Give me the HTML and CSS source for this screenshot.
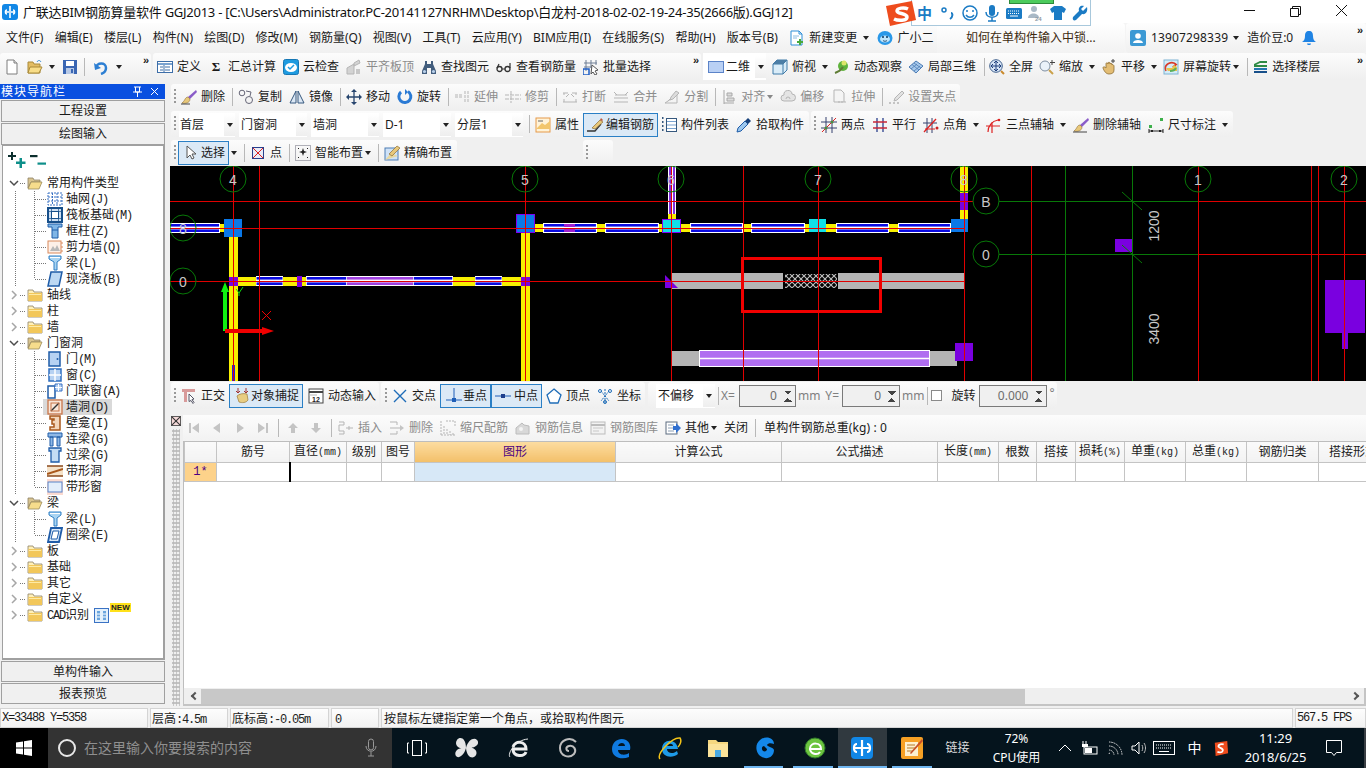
FILE: index.html
```html
<!DOCTYPE html>
<html lang="zh">
<head>
<meta charset="utf-8">
<title>广联达BIM钢筋算量软件 GGJ2013</title>
<link rel="stylesheet" href="styles.css">
</head>
<body>
<svg class="sprite" xmlns="http://www.w3.org/2000/svg">
  <symbol id="fo" viewBox="0 0 16 16"><path d="M1 3h5l1 2h6v2H4L1 13z" fill="#d9c48e" stroke="#8d8165" stroke-width=".8"/><path d="M4 7h11l-3 7H1z" fill="#f6dc8c" stroke="#9a8a5c" stroke-width=".8"/></symbol>
  <symbol id="fc" viewBox="0 0 16 16"><path d="M1 3h5l1 2h8v9H1z" fill="#fff0b8" stroke="#8d8165" stroke-width=".8"/><path d="M1.5 6h13.5v8H1.500z" fill="#f2c75a"/><path d="M2 7h12v1H2z" fill="#fdeaa6"/></symbol>
  <symbol id="chd" viewBox="0 0 10 10"><path d="M1 3l4 4 4-4" fill="none" stroke="#4d4d4d" stroke-width="1.5"/></symbol>
  <symbol id="chr" viewBox="0 0 10 10"><path d="M3 1l4 4-4 4" fill="none" stroke="#a6a6a6" stroke-width="1.500"/></symbol>
  <symbol id="beam" viewBox="0 0 16 16"><path d="M2 1h12v3l-4 3v8H7V7L2 4z" fill="#a9d4f2" stroke="#2f7fc4"/><path d="M3 2.500h10" stroke="#fff"/></symbol>
  <symbol id="st" viewBox="0 0 100 10" preserveAspectRatio="none"><rect width="100" height="10" fill="#fff"/><rect x="2" y="1" width="96" height="2.600" fill="#0a0ae0"/><rect x="2" y="6.400" width="96" height="2.600" fill="#0a0ae0"/></symbol>
  <symbol id="stp" viewBox="0 0 100 10" preserveAspectRatio="none"><rect width="100" height="10" fill="#fff"/><rect y="1" width="100" height="2.600" fill="#a040e0"/><rect y="6.400" width="100" height="2.600" fill="#a040e0"/></symbol>
</svg>

<header class="titlebar">
  <svg class="appicon" viewBox="0 0 16 16"><rect width="16" height="16" rx="3" fill="#1187e6"/><path d="M8 2v5M8 9v5M3 8h10M5 6c-2 0-2 4 0 4M11 6c2 0 2 4 0 4" fill="none" stroke="#fff" stroke-width="1.600"/></svg>
  <span class="title">广联达BIM钢筋算量软件 GGJ2013 - [C:\Users\Administrator.PC-20141127NRHM\Desktop\白龙村-2018-02-02-19-24-35(2666版).GGJ12]</span>
  <div class="winbtns">
    <svg viewBox="0 0 46 23"><path d="M18 10.500h11" stroke="#111"/></svg>
    <svg viewBox="0 0 46 23"><path d="M18.500 8.500h8v8h-8zM20.500 8.500v-2h8v8h-2" fill="none" stroke="#111"/></svg>
    <svg viewBox="0 0 46 23"><path d="M18 5l11 11M29 5L18 16" stroke="#111"/></svg>
  </div>
</header>

<div class="sogou">
  <svg class="sg-s" viewBox="0 0 32 26"><path d="M1 6l26-5 4 19-26 6z" fill="#ee4c1d"/><path d="M23 9c-4-2-11-1-11 2s10 2 10 6-9 4-13 2" fill="none" stroke="#fff" stroke-width="3.500"/></svg>
  <div class="sg-bar">
    <span class="sg-zh">中</span>
    <svg viewBox="0 0 18 18"><circle cx="5" cy="6" r="2" fill="none" stroke="#1b7bc4" stroke-width="1.500"/><path d="M12 9c2 0 2 4-1 6" fill="none" stroke="#1b7bc4" stroke-width="2"/></svg>
    <svg viewBox="0 0 18 18"><circle cx="9" cy="9" r="7" fill="none" stroke="#1b7bc4" stroke-width="1.500"/><path d="M6 6v2M12 6v2M5 11c2 3 6 3 8 0" fill="none" stroke="#1b7bc4" stroke-width="1.500"/></svg>
    <svg viewBox="0 0 18 18"><rect x="6" y="1" width="6" height="11" rx="3" fill="#1b7bc4"/><path d="M3 8c0 7 12 7 12 0M9 14v3M5 17h8" fill="none" stroke="#1b7bc4" stroke-width="1.500"/></svg>
    <svg viewBox="0 0 18 18"><rect x="1" y="4" width="16" height="11" rx="1.500" fill="#1b7bc4"/><path d="M3 7h12M3 9.500h12" stroke="#fff" stroke-dasharray="1 1"/><path d="M5 12h8" stroke="#fff"/></svg>
    <svg viewBox="0 0 18 18"><circle cx="7" cy="5" r="3" fill="#a9b9c6"/><path d="M1 14c0-6 11-6 11 0z" fill="#a9b9c6"/><text x="8" y="17" class="sg-24">24</text></svg>
    <svg viewBox="0 0 18 18"><path d="M5 2h8l4 3-2 4-2-1v8H5V8L3 9 1 5z" fill="#1b7bc4"/></svg>
    <svg viewBox="0 0 18 18"><path d="M16 3l-4 4-2-2 3-3c-3-1-6 1-5 5L2 13c-1 3 1 4 3 3l6-6c4 1 6-3 5-7z" fill="#1b7bc4"/></svg>
  </div>
  <div class="sg-tab"></div>
</div>

<nav class="menubar">
  <div class="menu-main">
    <span>文件(F)</span><span>编辑(E)</span><span>楼层(L)</span><span>构件(N)</span><span>绘图(D)</span><span>修改(M)</span><span>钢筋量(Q)</span><span>视图(V)</span><span>工具(T)</span><span>云应用(Y)</span><span>BIM应用(I)</span><span>在线服务(S)</span><span>帮助(H)</span><span>版本号(B)</span>
    <span class="t"><svg class="i" viewBox="0 0 16 16"><path d="M2 1h8l3 3v11H2z" fill="#fff" stroke="#2f8fd8"/><path d="M10 1v3h3" fill="none" stroke="#2f8fd8"/><path d="M4 6h6M4 8h4" stroke="#8dbde0"/><path d="M10 9h2v2h2v2h-2v2h-2v-2H8v-2h2z" fill="#47a93c"/></svg><span>新建变更</span><i class="dd"></i></span>
    <span class="t t-xiao"><svg class="i" viewBox="0 0 16 16"><ellipse cx="8" cy="8" rx="7.500" ry="7" fill="#2a98e8"/><ellipse cx="8" cy="9" rx="5" ry="3.600" fill="#bfe5fb"/><circle cx="6" cy="7" r="1" fill="#08355e"/><circle cx="10" cy="7" r="1" fill="#08355e"/><path d="M6 10.500c1 1 3 1 4 0" fill="none" stroke="#08355e" stroke-width=".8"/></svg><span>广小二</span></span>
  </div>
  <div class="menu-hint"><span>如何在单构件输入中锁...</span></div>
  <div class="menu-user">
    <svg class="i" viewBox="0 0 16 16"><rect width="16" height="16" rx="2" fill="#3c99d4"/><circle cx="8" cy="6" r="2.800" fill="#fff"/><path d="M3 13c0-4 10-4 10 0z" fill="#fff"/></svg>
    <span class="num">13907298339</span><i class="dd dd-u"></i><span>造价豆:0</span>
    <svg class="i bell" viewBox="0 0 16 16"><path d="M8 1c-3 0-4 2-4 5 0 3-1 5-3 6h14c-2-1-3-3-3-6 0-3-1-5-4-5z" fill="#2084e4"/><path d="M6 13.500c0 2 4 2 4 0z" fill="#2084e4"/></svg>
    <b class="more">»</b>
  </div>
</nav>

<div class="tb1">
  <div class="band band-a">
    <svg class="i" viewBox="0 0 16 16"><path d="M3 1h7l3 3v11H3z" fill="#fff" stroke="#7d7d7d"/><path d="M10 1v3h3" fill="#e8e8e8" stroke="#7d7d7d"/></svg>
    <span class="t"><svg class="i" viewBox="0 0 16 16"><path d="M1 3h5l1 2h6v9H1z" fill="#e3bd63" stroke="#a98a3a"/><path d="M3 8h12l-3 6H1z" fill="#f8dd88" stroke="#a98a3a"/><path d="M10 3c1-2 3-2 4 0" fill="none" stroke="#2c86d1"/></svg><i class="dd dd-near"></i></span>
    <svg class="i" viewBox="0 0 16 16"><rect x="1" y="1" width="14" height="14" fill="#3a66b3"/><rect x="4" y="2" width="8" height="5" fill="#fff"/><rect x="4" y="9" width="8" height="6" fill="#b7c9e6"/><rect x="9" y="10" width="2" height="4" fill="#3a66b3"/></svg>
    <i class="sep"></i>
    <span class="t t-undo"><svg class="i" viewBox="0 0 16 16"><path d="M3 9c1-6 10-6 10 0 0 3-2 5-5 6" fill="none" stroke="#2d7fd3" stroke-width="2.500"/><path d="M1 4l1 7 6-2z" fill="#2d7fd3"/></svg><i class="dd dd-near2"></i></span>
    <b class="more">»</b>
  </div>
  <div class="band band-b">
    <span class="t"><svg class="i" viewBox="0 0 16 16"><rect x=".5" y="2.500" width="15" height="11" fill="#fff" stroke="#3d6ea8"/><path d="M1 5h14" stroke="#7aa3d0" stroke-width="2"/><path d="M3 8h3M3 11h3M8 8h5M8 11h5M7 6v7" stroke="#3d6ea8"/></svg><span>定义</span></span>
    <span class="t"><b class="sigma">Σ</b><span>汇总计算</span></span>
    <span class="t"><svg class="i" viewBox="0 0 16 16"><rect x=".5" y=".5" width="15" height="15" rx="2" fill="#1e9be0" stroke="#1677b4"/><ellipse cx="8" cy="8.500" rx="6" ry="4.500" fill="#fff"/><path d="M5 8l2 2 4-4" fill="none" stroke="#1e9be0" stroke-width="1.500"/></svg><span>云检查</span></span>
    <span class="t off"><svg class="i" viewBox="0 0 16 16"><path d="M1 9l7-4v10H1zM8 4l5-3 1 3-6 3z" fill="#d3d3d3" stroke="#b5b5b5"/><path d="M10 10h4v5h-4z" fill="#c7c7c7"/></svg><span>平齐板顶</span></span>
    <span class="t"><svg class="i" viewBox="0 0 16 16"><path d="M4 2h2v3h4V2h2v3l3 7v3H10V9H6v6H1v-3l3-7z" fill="#425d7d"/><circle cx="3.500" cy="12.500" r="1.600" fill="#b8d0ea"/><circle cx="12.500" cy="12.500" r="1.600" fill="#b8d0ea"/></svg><span>查找图元</span></span>
    <span class="t"><svg class="i" viewBox="0 0 16 16"><circle cx="3.500" cy="10" r="2.500" fill="none" stroke="#333" stroke-width="1.300"/><circle cx="11.500" cy="10" r="2.500" fill="none" stroke="#333" stroke-width="1.300"/><path d="M6 10h3M1 9l2-4M14 9V4" fill="none" stroke="#333" stroke-width="1.200"/></svg><span>查看钢筋量</span></span>
    <span class="t"><svg class="i" viewBox="0 0 16 16"><path d="M3 1v11M8 1v8M13 1v5M1 4h13M1 8h9" stroke="#6f7f95"/><rect x="0" y="10" width="6" height="6" fill="none" stroke="#1f5ec4" stroke-width="1.500"/><path d="M9 6l6 5-3 1 2 3-2 1-2-3-2 2z" fill="#fff" stroke="#555"/></svg><span>批量选择</span></span>
    <b class="more">»</b>
  </div>
  <div class="band band-c">
    <span class="mode"><svg class="i" viewBox="0 0 16 16"><rect x=".5" y="2.500" width="15" height="11" fill="#b9d0f4" stroke="#5b83c8"/></svg><span>二维</span><i class="ddcell"><i class="dd"></i></i></span>
    <span class="t"><svg class="i" viewBox="0 0 16 16"><path d="M1 5l4-4h10v10l-4 4H1z" fill="#d9ecf8" stroke="#3f7aa8"/><path d="M1 5h10v10M11 5l4-4" fill="none" stroke="#3f7aa8"/><path d="M1 5l4-4h10l-4 4z" fill="#4c7ea6"/></svg><span>俯视</span><i class="dd"></i></span>
    <span class="t"><svg class="i" viewBox="0 0 16 16"><circle cx="9" cy="7" r="5" fill="#5fb33c"/><circle cx="10" cy="4" r="2.500" fill="#dce66a"/><path d="M1 14c3-1 6-3 8-6" stroke="#5f7d35" stroke-width="2" fill="none"/></svg><span>动态观察</span></span>
    <span class="t"><svg class="i" viewBox="0 0 16 16"><path d="M1 8l7-6 7 5-7 7z" fill="#a7c9ec" stroke="#4c7cb4"/><path d="M4 5.500l7 5.500M6 4l7 5M3 10l6-5M6 12l6-5" stroke="#4c7cb4" stroke-width=".8"/></svg><span>局部三维</span></span>
    <i class="sep"></i>
    <span class="t"><svg class="i" viewBox="0 0 16 16"><circle cx="7" cy="7" r="6.300" fill="#d6e4f5" stroke="#40608c"/><path d="M7 2v10M2 7h10M7 2l-2 2M7 2l2 2M7 12l-2-2M7 12l2-2M2 7l2-2M2 7l2 2M12 7l-2-2M12 7l-2 2" fill="none" stroke="#1f3f7c"/><path d="M12 12l3 3" stroke="#c98a2c" stroke-width="2"/></svg><span>全屏</span></span>
    <span class="t"><svg class="i" viewBox="0 0 16 16"><circle cx="6" cy="7" r="5" fill="#eaf2fa" stroke="#7e8ea1"/><path d="M10 11l4 4" stroke="#caa14a" stroke-width="2"/><path d="M13 1v5M11 3.500h5" stroke="#444"/></svg><span>缩放</span><i class="dd"></i></span>
    <span class="t"><svg class="i" viewBox="0 0 16 16"><path d="M2 9c0-2 2-1 3 0V5c0-2 2-1 2 0v-1c0-1 2-1 2 0v1c0-1 2-1 2 0v1c0-1 2 0 2 1v4c0 3-2 4-5 4s-5-3-6-6z" fill="#e3bd74" stroke="#8e6f35" stroke-width=".8"/><path d="M12 0v4M10 2h4" stroke="#444"/></svg><span>平移</span><i class="dd"></i></span>
    <span class="t"><svg class="i" viewBox="0 0 16 16"><rect x="1" y="1" width="14" height="14" fill="#d3ecf8" stroke="#7fb4d3"/><path d="M3 12c-3-7 6-11 11-6" fill="none" stroke="#d73a2a" stroke-width="1.500"/><path d="M13 4v4h-4z" fill="#d73a2a"/><path d="M3 9h6l2-3 3 2v4H5z" fill="#e8c44d"/><path d="M7 12c3 0 5-1 6-3" stroke="#5bb05a" fill="none" stroke-width="2"/></svg><span>屏幕旋转</span><i class="dd dd-tight"></i></span>
    <i class="sep"></i>
    <span class="t"><svg class="i" viewBox="0 0 16 16"><path d="M2 5l6-3h7v2H8L4 6h11v2H2z" fill="#2f8b45"/><path d="M2 9h13v2H2z" fill="#2577b0"/><path d="M2 12h13v2H2z" fill="#174f8a"/></svg><span>选择楼层</span></span>
    <b class="more">»</b>
  </div>
</div>

<div class="work">
  <aside class="nav">
    <div class="nav-h"><span>模块导航栏</span><svg viewBox="0 0 36 15"><path d="M5 3h7M6.500 3v5h4V3M4 8h9M8.500 8v5" fill="none" stroke="#fff"/><path d="M22 4l7 7M29 4l-7 7" stroke="#fff"/></svg></div>
    <div class="nav-b">工程设置</div>
    <div class="nav-b">绘图输入</div>
    <div class="tree">
      <div class="tree-tools">
        <svg viewBox="0 0 18 18"><path d="M3 0h2v3h3v2H5v3H3V5H0V3h3z" fill="#0c2f2e"/><path d="M11.500 6h2.500v3.500H17.500V12H14v4h-2.500v-4H8V9.500h3.500z" fill="#0e8f8a"/></svg>
        <svg viewBox="0 0 18 18"><path d="M0 3h7.500v2.200H0z" fill="#0c2f2e"/><path d="M7.500 10.500H16v2.200H7.500z" fill="#0e8f8a"/></svg>
      </div>

      <div class="tr top"><svg class="ch"><use href="#chd"/></svg><svg class="fd"><use href="#fo"/></svg><span>常用构件类型</span></div>
      <div class="kids"><div class="kin">
        <div class="tr"><svg class="ti" viewBox="0 0 16 16"><path d="M1 2h14v12H1zM5.500 2v12M10 2v12M1 6h14M1 10h14" fill="none" stroke="#3a72c4" stroke-dasharray="2 1"/></svg><span>轴网<small>(J)</small></span></div>
        <div class="tr"><svg class="ti" viewBox="0 0 16 16"><rect x="1" y="1" width="14" height="14" fill="#cfe0f3" stroke="#174f8a" stroke-width="2"/><rect x="4.500" y="4.500" width="7" height="7" fill="#fff" stroke="#174f8a"/><path d="M1 4.500h14M1 11.500h14M4.500 1v14M11.500 1v14" stroke="#174f8a" stroke-width=".7"/></svg><span>筏板基础<small>(M)</small></span></div>
        <div class="tr"><svg class="ti" viewBox="0 0 16 16"><path d="M1 1h14v3H11v11H5V4H1z" fill="#7fb5e6" stroke="#1f5ca8"/><path d="M5 7h6" stroke="#1f5ca8"/></svg><span>框柱<small>(Z)</small></span></div>
        <div class="tr"><svg class="ti" viewBox="0 0 16 16"><rect x="1" y="2" width="13" height="12" fill="#fdf0e8" stroke="#d98a5c"/><path d="M3 12l3-5 2 3 2-4 3 6z" fill="#b8b8b8"/><path d="M14 4h2M14 8h2M14 12h2" stroke="#d98a5c"/></svg><span>剪力墙<small>(Q)</small></span></div>
        <div class="tr"><svg class="ti"><use href="#beam"/></svg><span>梁<small>(L)</small></span></div>
        <div class="tr"><svg class="ti" viewBox="0 0 16 16"><path d="M4 1h11l-3 14H1z" fill="#bcd8f3" stroke="#1f5ca8" stroke-width="1.500"/></svg><span>现浇板<small>(B)</small></span></div>
      </div></div>

      <div class="tr top"><svg class="ch"><use href="#chr"/></svg><svg class="fd"><use href="#fc"/></svg><span>轴线</span></div>
      <div class="tr top"><svg class="ch"><use href="#chr"/></svg><svg class="fd"><use href="#fc"/></svg><span>柱</span></div>
      <div class="tr top"><svg class="ch"><use href="#chr"/></svg><svg class="fd"><use href="#fc"/></svg><span>墙</span></div>
      <div class="tr top"><svg class="ch"><use href="#chd"/></svg><svg class="fd"><use href="#fo"/></svg><span>门窗洞</span></div>
      <div class="kids"><div class="kin">
        <div class="tr"><svg class="ti" viewBox="0 0 16 16"><rect x="2" y="1" width="11" height="14" fill="#b7d2f2" stroke="#1f5ca8" stroke-width="1.500"/><circle cx="10.500" cy="8" r="1" fill="#1f5ca8"/></svg><span>门<small>(M)</small></span></div>
        <div class="tr"><svg class="ti" viewBox="0 0 16 16"><rect x="2" y="2" width="12" height="12" fill="#b7d2f2" stroke="#2f6fc0" stroke-width="1.500"/><path d="M8 2v12M2 8h12" stroke="#fff" stroke-width="1.500"/></svg><span>窗<small>(C)</small></span></div>
        <div class="tr"><svg class="ti" viewBox="0 0 16 16"><path d="M1 3h7v12H1z" fill="#fff" stroke="#1f5ca8" stroke-width="1.500"/><path d="M8 1h7v7H8z" fill="#b7d2f2" stroke="#3a72c4"/><path d="M11.500 1v7M8 4.500h7" stroke="#fff"/></svg><span>门联窗<small>(A)</small></span></div>
        <div class="tr sel"><svg class="ti" viewBox="0 0 16 16"><rect x="1" y="1" width="14" height="14" fill="#f8e6d8" stroke="#c8764a" stroke-width="1.300"/><path d="M4 12l8-8" stroke="#333" stroke-width="1.400"/><rect x="4" y="4" width="8" height="8" fill="none" stroke="#c8764a"/></svg><span>墙洞<small>(D)</small></span></div>
        <div class="tr"><svg class="ti" viewBox="0 0 16 16"><path d="M3 1h10v14H3v-3h4V9H5V5h2V4H3z" fill="#f3d6bb" stroke="#a9581c" stroke-width="1.500"/></svg><span>壁龛<small>(I)</small></span></div>
        <div class="tr"><svg class="ti" viewBox="0 0 16 16"><path d="M1 2h14v4H1zM3 6h3v9H3zM10 6h3v9h-3z" fill="#8fb8e6" stroke="#1f5ca8"/></svg><span>连梁<small>(G)</small></span></div>
        <div class="tr"><svg class="ti" viewBox="0 0 16 16"><path d="M2 1h12v3h-2v11H4V4H2z" fill="#c3dcf4" stroke="#1f5ca8" stroke-width="1.300"/></svg><span>过梁<small>(G)</small></span></div>
        <div class="tr"><svg class="ti" viewBox="0 0 16 16"><rect y="3" width="16" height="10" fill="#f5e2c9"/><path d="M0 3h16M0 13h16" stroke="#8a4a1c" stroke-width="1.400"/><path d="M0 11l16-5" stroke="#a9581c" stroke-width="2"/></svg><span>带形洞</span></div>
        <div class="tr"><svg class="ti" viewBox="0 0 16 16"><rect y="0" width="16" height="16" fill="#fbdad0"/><rect x="1" y="3" width="14" height="10" fill="#e3eefb" stroke="#5b83c8"/></svg><span>带形窗</span></div>
      </div></div>
      <div class="tr top"><svg class="ch"><use href="#chd"/></svg><svg class="fd"><use href="#fo"/></svg><span>梁</span></div>
      <div class="kids"><div class="kin">
        <div class="tr"><svg class="ti"><use href="#beam"/></svg><span>梁<small>(L)</small></span></div>
        <div class="tr"><svg class="ti" viewBox="0 0 16 16"><path d="M4 1h11l-3 14H1z" fill="#dbeafa" stroke="#1f5ca8" stroke-width="1.800"/><path d="M6 4h6l-2 8H4z" fill="#fff" stroke="#1f5ca8"/></svg><span>圈梁<small>(E)</small></span></div>
      </div></div>
      <div class="tr top"><svg class="ch"><use href="#chr"/></svg><svg class="fd"><use href="#fc"/></svg><span>板</span></div>
      <div class="tr top"><svg class="ch"><use href="#chr"/></svg><svg class="fd"><use href="#fc"/></svg><span>基础</span></div>
      <div class="tr top"><svg class="ch"><use href="#chr"/></svg><svg class="fd"><use href="#fc"/></svg><span>其它</span></div>
      <div class="tr top"><svg class="ch"><use href="#chr"/></svg><svg class="fd"><use href="#fc"/></svg><span>自定义</span></div>
      <div class="tr top"><svg class="ch"><use href="#chr"/></svg><svg class="fd"><use href="#fc"/></svg><span><small>CAD</small>识别</span>
        <svg class="cad" viewBox="0 0 15 15"><rect x=".5" y=".5" width="14" height="14" fill="#e3f0fb" stroke="#3a72c4"/><path d="M3 3v9h3V3zM9 3v9h3V3z" fill="#6aa5de"/><path d="M3 6h3M3 9h3M9 6h3M9 9h3" stroke="#fff"/></svg>
        <span class="new">NEW</span>
      </div>
    </div>
    <div class="nav-b b2">单构件输入</div>
    <div class="nav-b b2">报表预览</div>
  </aside>

  <main class="right">
    <div class="row row-a">
      <div class="band band-edit">
        <i class="grip"></i>
        <span class="t"><svg class="i" viewBox="0 0 16 16"><path d="M15 1L7 8l2 2 7-7z" fill="#8a5cc8"/><path d="M7 8c-3 0-3 4-6 6 3 1 8 0 8-4z" fill="#e8c87a" stroke="#8e6f35" stroke-width=".6"/><path d="M0 15h9" stroke="#444"/></svg><span>删除</span></span>
        <i class="sep"></i>
        <span class="t"><svg class="i" viewBox="0 0 16 16"><circle cx="4" cy="4" r="2.800" fill="none" stroke="#667"/><circle cx="11" cy="11" r="3.500" fill="none" stroke="#667"/><path d="M8 2l5 1-1 4" fill="none" stroke="#667"/></svg><span>复制</span></span>
        <span class="t"><svg class="i" viewBox="0 0 16 16"><path d="M7 2v12H1zM9 2v12h6z" fill="#dce8f5" stroke="#36587e"/></svg><span>镜像</span></span>
        <i class="sep"></i>
        <span class="t"><svg class="i" viewBox="0 0 16 16"><path d="M8 1v14M1 8h14" stroke="#27456e" stroke-width="1.300"/><path d="M8 0l-3 3h6zM8 16l-3-3h6zM0 8l3-3v6zM16 8l-3-3v6z" fill="#27456e"/></svg><span>移动</span></span>
        <span class="t"><svg class="i" viewBox="0 0 16 16"><path d="M4 3a6 6 0 1 0 7-.5" fill="none" stroke="#2a7ad4" stroke-width="3"/><path d="M8 0v6l3-3z" fill="#2a7ad4"/></svg><span>旋转</span></span>
        <i class="sep"></i>
        <span class="t off"><svg class="i" viewBox="0 0 16 16"><path d="M1 8h8M1 6h8M11 2v12M14 2v12" stroke="#b5b5b5" stroke-dasharray="3 1"/></svg><span>延伸</span></span>
        <span class="t off"><svg class="i" viewBox="0 0 16 16"><path d="M0 6h16M0 10h16M6 2v12" stroke="#b5b5b5" stroke-dasharray="4 1"/></svg><span>修剪</span></span>
        <i class="sep"></i>
        <span class="t off"><svg class="i" viewBox="0 0 16 16"><path d="M1 4h5M10 4h5M1 13h14M2 4v2M14 4v2M2 10v3M14 10v3" stroke="#b5b5b5"/><path d="M4 8l3-3M12 8L9 5" stroke="#b5b5b5"/></svg><span>打断</span></span>
        <span class="t off"><svg class="i" viewBox="0 0 16 16"><path d="M1 3l3 3M15 3l-3 3M1 13h14M1 9h14M2 6h12" stroke="#b5b5b5"/></svg><span>合并</span></span>
        <span class="t off"><svg class="i" viewBox="0 0 16 16"><path d="M1 14h12V6zM13 3L4 12" fill="none" stroke="#b5b5b5"/><path d="M12 2l3 2-6 6-3 1 1-3z" fill="#dcdcdc" stroke="#b5b5b5"/></svg><span>分割</span></span>
        <i class="sep"></i>
        <span class="t off"><svg class="i" viewBox="0 0 16 16"><path d="M3 1v14M3 14h10M6 4h5v3H6zM6 9h7v3H6z" fill="#dcdcdc" stroke="#a8a8a8"/></svg><span>对齐</span><i class="dd dd-tight gray"></i></span>
        <span class="t off"><svg class="i" viewBox="0 0 16 16"><path d="M4 12a3 3 0 0 1 0-6 4 4 0 0 1 8-1 3.500 3.500 0 0 1 0 7z" fill="#e4e4e4" stroke="#b5b5b5"/><path d="M6 10a2 2 0 0 1 4 0" fill="none" stroke="#b5b5b5"/></svg><span>偏移</span></span>
        <span class="t off"><svg class="i" viewBox="0 0 16 16"><path d="M3 1h7l3 3v9H3z" fill="#f4f4f4" stroke="#b5b5b5"/><path d="M7 13h8" stroke="#b5b5b5" stroke-dasharray="2 1"/></svg><span>拉伸</span></span>
        <i class="sep"></i>
        <span class="t off"><svg class="i" viewBox="0 0 16 16"><path d="M1 14h2M5 14h2M9 14h2" stroke="#b5b5b5" stroke-width="1.500"/><path d="M14 2l2 2-7 7-3 1 1-3z" fill="#e2e2e2" stroke="#b5b5b5"/></svg><span>设置夹点</span></span>
      </div>
    </div>

    <div class="row row-b">
      <div class="band band-sel">
        <i class="grip"></i>
        <div class="combos">
          <span class="combo first"><span>首层</span><i class="ddcell"><i class="dd"></i></i></span>
          <span class="combo"><span>门窗洞</span><i class="ddcell"><i class="dd"></i></i></span>
          <span class="combo"><span>墙洞</span><i class="ddcell"><i class="dd"></i></i></span>
          <span class="combo"><span>D-1</span><i class="ddcell"><i class="dd"></i></i></span>
          <span class="combo"><span>分层1</span><i class="ddcell"><i class="dd"></i></i></span>
        </div>
        <i class="sep"></i>
        <span class="t"><svg class="i" viewBox="0 0 16 16"><rect x="1" y="1" width="14" height="14" fill="#fff3d8" stroke="#e69a4a"/><path d="M1 12l6-6 3 2 5-4v8H1z" fill="#f2c66d"/><path d="M3 4h5" stroke="#666"/></svg><span>属性</span></span>
        <span class="t box"><svg class="i" viewBox="0 0 16 16"><path d="M0 14h8l6-7" fill="none" stroke="#333" stroke-width="1.300"/><path d="M5 11l8-8 3 2-8 7z" fill="#e8c87a" stroke="#8e6f35" stroke-width=".7"/><path d="M13 3l1-2 2 2-1 1" fill="#c05a3a"/></svg><span>编辑钢筋</span></span>
        <span class="t"><svg class="i" viewBox="0 0 16 16"><path d="M1 1h2M1 5h2M1 9h2M1 13h2" stroke="#36587e" stroke-width="2" stroke-dasharray="1.500 .7"/><rect x="5.500" y="1.500" width="10" height="13" fill="#fff" stroke="#36587e"/><path d="M6 4.500h9M6 8h9M6 11.500h9" stroke="#7aa3d0"/></svg><span>构件列表</span></span>
        <span class="t"><svg class="i" viewBox="0 0 16 16"><path d="M1 15l1-4 7-7 3 3-7 7z" fill="#9cc7ee" stroke="#1f5ca8"/><path d="M9 4l3-3 3 3-3 3z" fill="#16407a"/></svg><span>拾取构件</span></span>
      </div>
      <div class="band band-aux">
        <i class="grip"></i>
        <span class="t"><svg class="i" viewBox="0 0 16 16"><path d="M5 0v16M11 0v16M0 5h16M0 11h16" stroke="#34406e"/><path d="M1 15L15 1" stroke="#d22" /><circle cx="5" cy="11" r="1.500" fill="#4d8a3a"/><circle cx="11" cy="5" r="1.500" fill="#4d8a3a"/></svg><span>两点</span></span>
        <span class="t"><svg class="i" viewBox="0 0 16 16"><path d="M5 1v14M11 1v14" stroke="#2a3f8c" stroke-width="1.300"/><path d="M1 5h14M1 11h14" stroke="#c8283a" stroke-width="1.300"/></svg><span>平行</span></span>
        <span class="t"><svg class="i" viewBox="0 0 16 16"><path d="M4 1v15M9 1v15M0 6h14" stroke="#34406e"/><path d="M1 15L13 2" stroke="#d22" stroke-width="1.300"/><circle cx="14" cy="11" r="1.500" fill="#c22"/><path d="M2 12h10" stroke="#d22"/></svg><span>点角</span><i class="dd"></i></span>
        <span class="t"><svg class="i" viewBox="0 0 16 16"><path d="M2 15c0-6 4-11 10-12M0 9h14M6 5v11" fill="none" stroke="#d22" stroke-width="1.200"/><circle cx="13" cy="3" r="1.300" fill="#d22"/></svg><span>三点辅轴</span><i class="dd"></i></span>
        <span class="t"><svg class="i" viewBox="0 0 16 16"><path d="M15 1L7 8l2 2 7-7z" fill="#8a5cc8"/><path d="M7 8c-3 0-3 4-6 6 3 1 8 0 8-4z" fill="#e8c87a" stroke="#8e6f35" stroke-width=".6"/><path d="M0 15h14" stroke="#444"/></svg><span>删除辅轴</span></span>
        <span class="t"><svg class="i" viewBox="0 0 16 16"><rect x="1" y="8" width="3" height="3" fill="#3cb04a"/><rect x="12" y="1" width="3" height="3" fill="#3cb04a"/><path d="M1 12v4M15 12v4M1 14h14" stroke="#222"/><path d="M5 14l-2 0M11 14h2" stroke="#222" stroke-width="2"/></svg><span>尺寸标注</span><i class="dd"></i></span>
      </div>
    </div>

    <div class="row row-c">
      <div class="band band-tool">
        <i class="grip"></i>
        <span class="t box"><svg class="i" viewBox="0 0 16 16"><path d="M5 1v12l3-3 2 4 2-1-2-4h4z" fill="#fff" stroke="#555"/></svg><span>选择</span></span>
        <i class="dd dd-b"></i>
        <i class="sep"></i>
        <span class="t"><svg class="i" viewBox="0 0 16 16"><rect x="2.500" y="2.500" width="11" height="11" fill="#e8ecf8" stroke="#2a3f8c"/><path d="M3 3l10 10M13 3L3 13" stroke="#d22"/></svg><span>点</span></span>
        <i class="sep"></i>
        <span class="t"><svg class="i" viewBox="0 0 16 16"><rect x=".5" y=".5" width="15" height="15" fill="none" stroke="#667" stroke-dasharray="1 1"/><path d="M8 3l1 3 3 1-3 1-1 3-1-3-3-1 3-1z" fill="#222"/><path d="M3 3h1v1H3zM12 3h1v1h-1zM3 12h1v1H3zM12 12h1v1h-1z" fill="#222"/></svg><span>智能布置</span><i class="dd dd-tight"></i></span>
        <i class="sep"></i>
        <span class="t"><svg class="i" viewBox="0 0 16 16"><rect x="1" y="3" width="13" height="12" fill="#cfe2f7" stroke="#4c7cb4"/><path d="M1 15l6-7 7 3" fill="#e8d8a0"/><path d="M5 9l8-8 3 2-8 8z" fill="#e8c87a" stroke="#8e6f35" stroke-width=".7"/></svg><span>精确布置</span></span>
      </div>
      <div class="band band-small"><i class="grip"></i></div>
    </div>

    <svg class="cad-view" viewBox="170 166 1196 215" xmlns="http://www.w3.org/2000/svg">
      <rect x="170" y="166" width="1196" height="215" fill="#000"/>
      <!-- upper beam run -->
      <g fill="#f8f000">
        <rect x="220" y="224" width="6" height="8"/><rect x="535" y="224" width="8" height="8"/><rect x="597" y="224" width="8" height="8"/>
        <rect x="659" y="224" width="4" height="8"/><rect x="681" y="224" width="9" height="8"/><rect x="743" y="224" width="8" height="8"/>
        <rect x="805" y="224" width="5" height="8"/><rect x="826" y="224" width="10" height="8"/><rect x="889" y="224" width="9" height="8"/>
        <rect x="229" y="237" width="9" height="144"/><rect x="521" y="233" width="9" height="148"/>
        <rect x="238" y="277" width="283" height="9"/>
        <rect x="668" y="214" width="8" height="5"/>
        <rect x="960" y="166" width="8" height="27"/><rect x="960" y="210" width="8" height="9"/>
      </g>
      <use href="#st" x="170" y="223" width="50" height="10"/><use href="#st" x="543" y="223" width="54" height="10"/><use href="#st" x="605" y="223" width="54" height="10"/>
      <use href="#st" x="690" y="223" width="53" height="10"/><use href="#st" x="751" y="223" width="54" height="10"/><use href="#st" x="836" y="223" width="53" height="10"/><use href="#st" x="898" y="223" width="53" height="10"/>
      <rect x="564" y="224" width="11" height="3" fill="#a020d0"/><rect x="564" y="229" width="11" height="3" fill="#a020d0"/>
      <!-- lower beam -->
      <use href="#st" x="256" y="276" width="27" height="10"/><use href="#st" x="306" y="276" width="41" height="10"/><use href="#stp" x="347" y="276" width="66" height="10"/><use href="#st" x="413" y="276" width="40" height="10"/><use href="#st" x="475" y="276" width="27" height="10"/>
      <rect x="297" y="276" width="5" height="11" fill="#7a00e0"/>
      <rect x="229" y="277" width="9" height="9" fill="#7a00e0"/><rect x="521" y="277" width="9" height="9" fill="#7a00e0"/>
      <!-- columns -->
      <rect x="224" y="219" width="18" height="18" fill="#0a78e8"/>
      <rect x="516.500" y="214.500" width="18" height="18" fill="#0a78e8" stroke="#8000f0"/>
      <rect x="662.500" y="219.500" width="18" height="13" fill="#10e0e8" stroke="#8000f0"/>
      <rect x="809" y="219" width="17" height="13" fill="#10e0e8"/>
      <rect x="951" y="219" width="17" height="13" fill="#0a78e8"/>
      <rect x="960" y="193" width="8" height="17" fill="#7a00e0"/>
      <rect x="668" y="166" width="8" height="48" fill="#fff"/><rect x="669" y="166" width="2" height="48" fill="#8030e0"/><rect x="673" y="166" width="2" height="48" fill="#8030e0"/>
      <rect x="232" y="365" width="3" height="16" fill="#2020e0"/>
      <!-- wall bars -->
      <rect x="671" y="273" width="293" height="16" fill="#b4b4b4"/>
      <rect x="783" y="273" width="55" height="16" fill="#000"/>
      <pattern id="hatch" width="6" height="6" patternUnits="userSpaceOnUse"><rect width="6" height="6" fill="#000"/><path d="M0 0l6 6M6 0L0 6" stroke="#c0c0c0" stroke-width="1.100"/></pattern>
      <rect x="785" y="274" width="52" height="14" fill="url(#hatch)"/>
      <path d="M665 275l13 13h-13z" fill="#7a00e0"/>
      <rect x="671" y="351" width="286" height="15" fill="#b4b4b4"/>
      <rect x="699.500" y="350.500" width="230" height="16" fill="#b06ef0" stroke="#fff"/>
      <path d="M699 358.500h231" stroke="#fff" stroke-width="1.500"/>
      <rect x="955" y="343" width="18" height="18" fill="#7a00e0"/>
      <rect x="1115" y="239" width="17" height="13" fill="#7a00e0"/>
      <rect x="1325" y="280" width="40" height="53" fill="#7a00e0"/><rect x="1342" y="333" width="6" height="16" fill="#7a00e0"/>
      <!-- grid lines -->
      <g stroke="#e00000" fill="none">
        <path d="M170 201.500H973M170 228.500H964M170 281.500H964M1198 254.500H1366M1198 201.500H1366"/>
        <path d="M233.500 166V381M259.500 166V381M525.500 166V381M671.500 166V381M743.500 166V381M818.500 166V381M964.500 166V381M1031.500 166V381M1198.500 166V381M1311.500 166V381M1318.500 166V381M1344.500 166V381"/>
      </g>
      <g stroke="#087808" fill="none">
        <path d="M999 201.500H1198M999 254.500H1198M1065.500 166V381M1132.500 166V381M1122 192l20 18M1122 245l20 18"/>
        <circle cx="233" cy="179" r="13"/><circle cx="525" cy="179" r="13"/><circle cx="671" cy="179" r="13"/><circle cx="818" cy="179" r="13"/><circle cx="964" cy="179" r="13"/><circle cx="1198" cy="179" r="13"/><circle cx="1344" cy="179" r="13"/>
        <circle cx="183" cy="228" r="13"/><circle cx="183" cy="281" r="13"/><circle cx="986" cy="201" r="13"/><circle cx="986" cy="254" r="13"/>
      </g>
      <g class="cad-t">
        <text x="233" y="185">4</text><text x="525" y="185">5</text><text x="671" y="185">6</text><text x="818" y="185">7</text><text x="964" y="185">8</text><text x="1198" y="185">1</text><text x="1344" y="185">2</text>
        <text x="183" y="234">8</text><text x="183" y="287">0</text><text x="986" y="207">B</text><text x="986" y="260">0</text>
        <text transform="translate(1159 226) rotate(-90)">1200</text><text transform="translate(1159 329) rotate(-90)">3400</text>
      </g>
      <!-- red selection and UCS -->
      <rect x="742.500" y="258.500" width="138" height="53" fill="none" stroke="#f00000" stroke-width="3"/>
      <path d="M223 331V288h4v43z" fill="#10f010"/><path d="M225 282l-4 10h8z" fill="#10f010"/>
      <path d="M225 329h43v4h-43z" fill="#f00000"/><path d="M262 327l12 4-12 4z" fill="#f00000"/>
      <path d="M262 311l9 9M271 311l-9 9" stroke="#f00000"/>
      <path d="M236 289l3 4 4-6M239 293v3" stroke="#10e010" fill="none"/>
    </svg>

    <div class="row row-d">
      <div class="band band-d1">
        <i class="grip"></i>
        <span class="t"><svg class="i" viewBox="0 0 16 16"><path d="M1 1h13v3H6v10H3V4H1z" fill="#d89a9a"/><path d="M8 6l5 5-2 .5 2 3-1 1-2-3-2 1z" fill="#fff" stroke="#556"/></svg><span>正交</span></span>
        <span class="t box"><svg class="i" viewBox="0 0 16 16"><path d="M4 0v5M12 0v5M4 5l-2-2M4 5l2-2M12 5l-2-2M12 5l2-2" fill="none" stroke="#a03030"/><path d="M3 8c2-2 6-3 10-2l1 6c-2 3-6 3-9 2z" fill="#e8cd82" stroke="#9c7a3a" stroke-width=".7"/></svg><span>对象捕捉</span></span>
        <span class="t"><svg class="i" viewBox="0 0 16 16"><rect x="1" y="1" width="14" height="14" fill="#fff" stroke="#444"/><path d="M1 4h14" stroke="#444" stroke-width="2"/><path d="M1 7h8" stroke="#b5b5b5"/><text x="4" y="14" class="ico-t">12</text></svg><span>动态输入</span></span>
      </div>
      <div class="band band-d2">
        <i class="grip"></i>
        <span class="t"><svg class="i" viewBox="0 0 16 16"><path d="M2 2l12 12M14 2L2 14" stroke="#1f6db8" stroke-width="1.400"/></svg><span>交点</span></span>
        <span class="t box"><svg class="i" viewBox="0 0 16 16"><path d="M0 12h16" stroke="#1f5fb8"/><path d="M8 0v12" stroke="#1f5fb8" stroke-width="1"/><rect x="6" y="10" width="4" height="4" fill="#1f5fb8"/></svg><span>垂点</span></span>
        <span class="t box box-j"><svg class="i" viewBox="0 0 16 16"><path d="M0 8h16" stroke="#1f5fb8"/><rect x="6" y="6" width="4" height="4" fill="#1f3f8c"/></svg><span>中点</span></span>
        <span class="t"><svg class="i" viewBox="0 0 16 16"><path d="M8 1l7 6-3 8H4L1 7z" fill="#fff" stroke="#1f6db8" stroke-width="1.300"/></svg><span>顶点</span></span>
        <span class="t"><svg class="i" viewBox="0 0 16 16"><path d="M4 3l4 5-4 5M12 3L8 8l4 5M8 1v14" fill="none" stroke="#1f6db8" stroke-dasharray="2 1"/><circle cx="3" cy="3" r="1.500" fill="none" stroke="#1f6db8"/><circle cx="13" cy="3" r="1.500" fill="none" stroke="#1f6db8"/><circle cx="8" cy="14" r="1.500" fill="none" stroke="#1f6db8"/></svg><span>坐标</span></span>
      </div>
      <div class="band band-d3">
        <span class="combo c-off"><span>不偏移</span><i class="ddcell"><i class="dd"></i></i></span>
        <i class="sep s-x"></i>
        <span class="gr">X=</span>
        <span class="num-in n-x"><b>0</b><i class="spin"></i></span>
        <span class="gr lab-mm">mm</span>
        <span class="gr lab-y">Y=</span>
        <span class="num-in n-y"><b>0</b><i class="spin"></i></span>
        <span class="gr lab-mm">mm</span>
        <i class="sep s-r"></i>
        <i class="chk"></i>
        <span class="lab-r">旋转</span>
        <span class="num-in n-r"><b>0.000</b><i class="spin"></i></span>
        <span class="gr lab-d">°</span>
      </div>
    </div>

    <section class="panel">
      <div class="strip">
        <svg viewBox="0 0 12 12"><rect x=".5" y=".5" width="11" height="11" fill="#f4d8d8" stroke="#444"/><path d="M1 1l10 10M11 1L1 11" stroke="#333" stroke-width="1.300"/></svg>
        <i class="strip-dots"></i>
      </div>
      <div class="pane">
        <div class="ptools">
          <svg class="i" viewBox="0 0 16 16"><path d="M3 3h2v10H3zM13 3v10L6 8z" fill="#c4c4c4"/></svg>
          <svg class="i" viewBox="0 0 16 16"><path d="M11 3v10L4 8z" fill="#c4c4c4"/></svg>
          <svg class="i" viewBox="0 0 16 16"><path d="M5 3v10l7-5z" fill="#c4c4c4"/></svg>
          <svg class="i" viewBox="0 0 16 16"><path d="M13 3h-2v10h2zM3 3v10l7-5z" fill="#c4c4c4"/></svg>
          <i class="sep"></i>
          <svg class="i" viewBox="0 0 16 16"><path d="M8 3l5 5h-3v5H6V8H3z" fill="#c4c4c4"/></svg>
          <svg class="i" viewBox="0 0 16 16"><path d="M8 13l5-5h-3V3H6v5H3z" fill="#c4c4c4"/></svg>
          <i class="sep"></i>
          <span class="t off"><svg class="i" viewBox="0 0 16 16"><path d="M1 2h5v3H1M1 11h5v3H1M1 5v6" fill="none" stroke="#b5b5b5"/><path d="M8 8h7M11 6v4" stroke="#b5b5b5"/></svg><span>插入</span></span>
          <span class="t off"><svg class="i" viewBox="0 0 16 16"><path d="M1 2h7v3M1 14h7v-3M1 8h13" fill="none" stroke="#b5b5b5"/><path d="M11 5l4 3-4 3z" fill="#c4c4c4"/></svg><span>删除</span></span>
          <span class="t off"><svg class="i" viewBox="0 0 16 16"><path d="M1 1v14M4 6v9M7 9v6M10 11v4M13 13v2M1 15h14M6 1h9v5" fill="none" stroke="#b5b5b5" stroke-dasharray="2 1"/></svg><span>缩尺配筋</span></span>
          <span class="t off"><svg class="i" viewBox="0 0 16 16"><path d="M1 8l6-5 2 2 5 1v8H1z" fill="#d8d8d8" stroke="#bcbcbc"/><circle cx="6" cy="9" r="2" fill="#f4f4f4"/></svg><span>钢筋信息</span></span>
          <span class="t off"><svg class="i" viewBox="0 0 16 16"><rect x="1" y="2" width="14" height="12" fill="#f2f2f2" stroke="#bcbcbc"/><path d="M1 5h14" stroke="#bcbcbc" stroke-width="2"/><path d="M3 8h10M3 11h6" stroke="#c8c8c8"/></svg><span>钢筋图库</span></span>
          <span class="t"><svg class="i" viewBox="0 0 16 16"><rect x="1" y="2" width="11" height="12" fill="#fff" stroke="#5c6c80"/><path d="M3 5h6M3 8h6M3 11h6" stroke="#8ea0b5"/><path d="M8 6h3V3l5 5-5 5v-3H8z" fill="#2f6fd0"/></svg><span>其他</span><i class="dd dd-tight"></i></span>
          <span>关闭</span>
          <i class="sep"></i>
          <span class="total">单构件钢筋总重(kg) : 0</span>
        </div>
        <div class="grid-wrap">
          <table class="grid">
            <colgroup><col class="c0"><col class="c1"><col class="c2"><col class="c3"><col class="c4"><col class="c5"><col class="c6"><col class="c7"><col class="c8"><col class="c9"><col class="c10"><col class="c11"><col class="c12"><col class="c13"><col class="c14"><col class="c15"></colgroup>
            <thead><tr><th></th><th>筋号</th><th>直径<small>(mm)</small></th><th>级别</th><th>图号</th><th class="hot">图形</th><th>计算公式</th><th>公式描述</th><th>长度<small>(mm)</small></th><th>根数</th><th>搭接</th><th>损耗<small>(%)</small></th><th>单重<small>(kg)</small></th><th>总重<small>(kg)</small></th><th>钢筋归类</th><th class="clip">搭接形式</th></tr></thead>
            <tbody><tr><td class="rh">1*</td><td></td><td class="cur"></td><td></td><td></td><td class="pick"></td><td></td><td></td><td></td><td></td><td></td><td></td><td></td><td></td><td></td><td></td></tr></tbody>
          </table>
        </div>
        <div class="hscroll"><i class="arr-l"></i><div class="thumb"></div><i class="arr-r"></i></div>
      </div>
    </section>
  </main>
</div>

<footer class="status">
  <span class="s1">X=33488 Y=5358</span>
  <span class="s2">层高<small>:4.5m</small></span>
  <span class="s3">底标高<small>:-0.05m</small></span>
  <span class="s4"><small>0</small></span>
  <span class="s5">按鼠标左键指定第一个角点，或拾取构件图元</span>
  <span class="s6">567.5 FPS</span>
</footer>

<div class="taskbar">
  <div class="start"><svg viewBox="0 0 16 16"><path d="M0 2.500l7-1v6H0zM8 1.300l8-1.300v7.500H8zM0 8.500h7v6l-7-1zM8 8.500h8V16l-8-1.200z" fill="#fff"/></svg></div>
  <div class="search">
    <svg class="cortana" viewBox="0 0 20 20"><circle cx="10" cy="10" r="8" fill="none" stroke="#e8e8e8" stroke-width="2"/></svg>
    <span>在这里输入你要搜索的内容</span>
    <svg class="mic" viewBox="0 0 12 20"><rect x="3.500" y="1" width="5" height="11" rx="2.500" fill="none" stroke="#999"/><path d="M1 8c0 7 10 7 10 0M6 14v4M3 18h6" fill="none" stroke="#999"/></svg>
  </div>
  <div class="apps">
    <span class="app"><svg viewBox="0 0 24 24"><rect x="7.500" y="4.500" width="9" height="15" fill="none" stroke="#fff"/><path d="M4 7H2.500v10H4M20 7h1.500v10H20" fill="none" stroke="#fff"/></svg></span>
    <span class="app"><svg viewBox="0 0 24 24"><path d="M12 12C4 14 0 8 3 4s9-2 9 8zM12 12c2-8 8-11 11-8s0 9-11 8zM12 12c8-2 12 3 10 7s-9 4-10-7zM12 12c-2 8-8 11-10 8s0-9 10-8z" fill="#e6e6e6"/></svg></span>
    <span class="app n3"><svg viewBox="0 0 24 24"><path d="M5 13h14c0-8-11-9-13-2M19 16c-2 5-12 5-13-2" fill="none" stroke="#eee" stroke-width="3"/><path d="M3 21C0 18 8 4 21 3" fill="none" stroke="#eee" stroke-width="1"/></svg></span>
    <span class="app n3"><svg viewBox="0 0 24 24"><path d="M20 6C14 0 4 4 4 12s9 11 14 6c3-4 0-9-5-8-4 1-3 5 0 5" fill="none" stroke="#bdbdbd" stroke-width="2"/></svg></span>
    <span class="app n6"><svg viewBox="0 0 24 24"><path d="M3 13C3 4 12 1 17 4c4 2 5 7 4 10H9c0 5 7 6 11 3v4c-7 3-17 1-17-8zM9 10h7c0-4-6-4-7 0z" fill="#0f7ae0"/></svg></span>
    <span class="app n6"><svg viewBox="0 0 24 24"><path d="M4 13c0-11 15-11 16 0H9c0 5 7 5 10 2l1 3c-6 5-16 3-16-5zM9 10h6c0-3-5-3-6 0z" fill="#1e9be8"/><path d="M2 23C-2 18 14 1 22 2c2 3 0 7-2 9" fill="none" stroke="#f5c518" stroke-width="1.500"/></svg></span>
    <span class="app n4"><svg viewBox="0 0 24 24"><path d="M2 4h8l2 2h10v15H2z" fill="#f5d77f"/><path d="M2 8h20v13H2z" fill="#fbe39a"/><path d="M9 14h6v7H9z" fill="#4aa8e0"/></svg></span>
    <span class="app run n3"><svg viewBox="0 0 24 24"><path d="M6 4c6-5 14-2 14 4-3-1-6-1-7 1 1 2 6 2 7 5 0 7-7 10-12 7-6-3-8-12-2-17zm4 6c-2 0-3 3-1 5 2 1 4 0 4-2z" fill="#1488ea"/></svg></span>
    <span class="app run n2"><svg viewBox="0 0 24 24"><circle cx="12" cy="12" r="10" fill="#6cc440" stroke="#2f7a2a"/><path d="M6 13h12c0-7-10-7-11-1M17 16c-2 3-8 3-10-2" fill="none" stroke="#fff" stroke-width="2"/></svg></span>
    <span class="app run cur-app"><svg viewBox="0 0 24 24"><rect x="1" y="1" width="22" height="22" rx="4" fill="#1187e6"/><path d="M12 4v16M5 12h14M7 8c-4 0-4 8 0 8M17 8c4 0 4 8 0 8" fill="none" stroke="#fff" stroke-width="2.200"/></svg></span>
    <span class="app run"><svg viewBox="0 0 24 24"><rect x="1" y="1" width="22" height="22" rx="2" fill="#f7a125"/><path d="M5 6h13v14H5z" fill="#fdf0d0"/><path d="M7 9h8M7 12h8M7 15h6" stroke="#b57a2a"/><path d="M10 17L22 3l1 2-12 13z" fill="#c8502a"/></svg></span>
  </div>
  <span class="tray-link">链接</span>
  <div class="tray-cpu"><span>72%</span><span>CPU使用</span></div>
  <div class="tray">
    <svg viewBox="0 0 16 16" class="ti1"><path d="M2 11l6-6 6 6" fill="none" stroke="#fff"/></svg>
    <svg viewBox="0 0 18 16" class="ti2"><path d="M5 1v3M2 1v3" stroke="#fff"/><rect x="1" y="4" width="6" height="3" fill="#fff"/><rect x="3" y="7" width="13" height="7" fill="none" stroke="#fff"/><rect x="4" y="8" width="7" height="5" fill="#fff"/></svg>
    <svg viewBox="0 0 16 16" class="ti3"><path d="M2 14a1 1 0 0 1 1-1M2 10a5 5 0 0 1 5 5M2 6a9 9 0 0 1 9 9M2 2a13 13 0 0 1 13 13" fill="none" stroke="#ddd" stroke-dasharray="1.500 .8"/></svg>
    <svg viewBox="0 0 18 16" class="ti4"><path d="M1 6h3l4-4v12l-4-4H1z" fill="none" stroke="#fff"/><path d="M11 5c1 2 1 4 0 6M13 3c2 3 2 7 0 10" fill="none" stroke="#bbb"/></svg>
    <svg viewBox="0 0 22 16" class="ti5"><rect x=".5" y="1.500" width="21" height="13" fill="none" stroke="#fff"/><path d="M3 5h16M3 8h16" stroke="#fff" stroke-dasharray="1 1"/><path d="M6 11.500h10" stroke="#fff"/></svg>
    <span class="ti6">中</span>
    <svg viewBox="0 0 16 18" class="ti7"><path d="M1 3l14-2 1 14-14 3z" fill="#ee4c1d"/><path d="M11 5c-2-1-6 0-6 2s6 2 5 5-5 2-6 1" fill="none" stroke="#fff" stroke-width="2"/></svg>
  </div>
  <div class="clock"><span>11:29</span><span>2018/6/25</span></div>
  <svg class="notify" viewBox="0 0 18 18"><path d="M1.500 1.500h15v12h-5l-2.500 3-2.500-3h-5z" fill="none" stroke="#fff"/></svg>
  <i class="edge"></i>
</div>
</body>
</html>
```
FILE: styles.css
```css
* { box-sizing: border-box; }
html, body { margin: 0; padding: 0; }
body {
  width: 1366px; height: 768px; overflow: hidden; position: relative;
  display: flex; flex-direction: column;
  background: #f0f0f0; color: #1a1a1a;
  font: 12px/16px "Noto Sans", "Noto Sans CJK SC", sans-serif;
}
i { font-style: normal; display: block; }
.sprite { display: none; }
small { font: 10px/16px "Liberation Mono", monospace; }

/* title bar */
.titlebar { height: 23px; background: #fff; display: flex; align-items: center; padding-left: 2px; flex: none; }
.appicon { width: 16px; height: 16px; flex: none; }
.title { margin-left: 5px; font-size: 13px; white-space: nowrap; color: #111; letter-spacing: -.26px; }
.winbtns { margin-left: auto; margin-right: 2px; display: flex; }
.winbtns svg { width: 46px; height: 23px; }

.sogou { position: absolute; left: 885px; top: 0; width: 206px; height: 26px; display: flex; }
.sg-s { width: 32px; height: 26px; position: relative; z-index: 2; flex: none; }
.sg-bar { margin-left: -6px; flex: 1; height: 26px; background: #fff; border: 1px solid #a8c8dc; border-top: 0; display: flex; align-items: center; gap: 4px; padding-left: 5px; }
.sg-bar svg { width: 18px; height: 18px; flex: none; }
.sg-zh { color: #1b7bc4; font-weight: 700; font-size: 15px; width: 18px; }
.sg-24 { font: 700 6px "Liberation Sans", sans-serif; fill: #8c9aa6; }
.sg-tab { position: absolute; left: 124px; top: 0; width: 45px; height: 4px; background: #4ccb5c; border: 1px solid #2d8a3a; border-top: 0; }

/* shared */
.i { width: 16px; height: 16px; flex: none; }
.t { display: flex; align-items: center; gap: 4px; white-space: nowrap; flex: none; }
.off { color: #8c8c8c; }
.dd { width: 0; height: 0; border: 3.5px solid transparent; border-top: 4px solid #222; border-bottom: 0; margin-left: 2px; flex: none; }
.dd.gray { border-top-color: #888; }
.dd-tight { margin-left: -2px; }
.ddcell { width: 11px; height: 22px; background: linear-gradient(#fff, #eee); display: flex; align-items: center; justify-content: center; flex: none; }
.ddcell .dd { margin: 0; }
.sep { width: 1px; height: 18px; background: #b8b8b8; margin-right: -2px; flex: none; }
.grip { width: 2px; height: 16px; margin-right: -2px; flex: none; background: repeating-linear-gradient(#999 0 2px, transparent 2px 4px); }
.band { display: flex; align-items: center; gap: 7px; height: 100%; border-radius: 3px; background: linear-gradient(#fcfcfc, #f4f4f4 60%, #efefef); }
.more { font: 700 11px/10px "Liberation Sans", sans-serif; align-self: flex-start; margin-top: 2px; }
.box { border: 1px solid #2a7fc5; background: #dbe9f6; height: 24px; padding: 0 3px; }

/* menu */
.menubar { height: 30px; display: flex; flex: none; background: #f4f4f4; }
.menu-main { width: 937px; display: flex; align-items: center; gap: 11.3px; padding-left: 6px; background: linear-gradient(#fdfdfd, #f0f0f0); white-space: nowrap; flex: none; }
.menu-main .t-xiao { margin-left: -3px; }
.menu-hint { width: 188px; display: flex; align-items: center; padding-left: 29px; background: linear-gradient(#fff, #f2f2f2); flex: none; border-radius: 0 3px 3px 0; color: #3c2a10; }
.menu-user { margin-left: 1px; flex: 1; display: flex; align-items: center; padding-left: 4px; background: linear-gradient(#fdfdfd, #f0f0f0); border-radius: 3px; }
.menu-user .num { margin-left: 5px; letter-spacing: .15px; }
.dd-u { margin-left: 5px; margin-right: 8px; }
.bell { margin-left: 8px; }
.menu-user .more { margin-left: auto; margin-right: 3px; }

/* toolbar 1 */
.tb1 { height: 27px; display: flex; gap: 2px; flex: none; }
.tb1 .t, .row-b .t, .row-b .combos { margin-top: 1px; }
.band-a { width: 151px; padding-left: 4px; }
.band-a .t { gap: 0; }
.band-a .sep { margin-right: -1px; margin-left: -1px; }
.dd-near { margin-left: 6px; }
.t-undo { margin-left: 2px; }
.dd-near2 { margin-left: 7px; }
.band-a .more { margin-left: auto; margin-right: 2px; }
.band-b { width: 548px; padding-left: 4px; }
.band-b .more { margin-left: auto; margin-right: 2px; }
.sigma { width: 16px; text-align: center; font: 700 13px "Liberation Serif", serif; }
.band-c { flex: 1; padding-left: 0; gap: 6px; }
.mode { display: flex; align-items: center; gap: 2px; height: 27px; background: #fff; padding-left: 5px; }
.mode .ddcell { width: 11px; height: 22px; margin-left: 3px; }
.band-c .sep { margin-left: 2px; }
.band-c .more { margin-left: auto; margin-right: 3px; }

/* workspace */
.work { margin-top: 4px; height: 623px; display: flex; flex: none; }
.nav { width: 165px; flex: none; display: flex; flex-direction: column; }
.nav-h { height: 15px; background: #0a50e0; color: #fff; display: flex; justify-content: space-between; padding-left: 1px; line-height: 15px; letter-spacing: 1px; font-size: 12px; }
.nav-h svg { width: 36px; height: 15px; }
.nav-b { height: 22px; margin: 1px 0 0 1px; border: 1px solid #a0a0a0; background: #f0f0f0; text-align: center; line-height: 20px; flex: none; }
.nav-b + .nav-b { margin-top: 1px; }
.tree { margin: 0 0 0 2px; height: 515px; flex: none; border: 1px solid #a0a0a0; border-width: 1px 2px 2px 1px; background: #fff; position: relative; }
.tree-tools { height: 29px; display: flex; align-items: center; gap: 4px; padding-left: 5px; }
.tree-tools svg { width: 18px; height: 18px; }
.tr { height: 16px; display: flex; align-items: center; white-space: nowrap; position: relative; }
.tr small, .status small { font: 12px/16px "Liberation Mono", monospace; letter-spacing: -1.2px; color: #222; }
.top { padding-left: 6px; background: repeating-linear-gradient(90deg, #777 0 1px, transparent 1px 2px) 17px 8px / 6px 1px no-repeat; }
.ch { width: 10px; height: 10px; flex: none; }
.fd { width: 16px; height: 16px; margin-left: 8px; margin-right: 4px; flex: none; }
.kids { margin-left: 12px; padding-left: 19px; background: repeating-linear-gradient(#777 0 1px, transparent 1px 2px) 0 0 / 1px 100% no-repeat; }
.kin { background: repeating-linear-gradient(#777 0 1px, transparent 1px 2px) 0 0 / 1px calc(100% - 8px) no-repeat; }
.kin .tr { padding-left: 13px; }
.kin .tr::before { content: ""; width: 11px; height: 1px; position: absolute; left: 1px; top: 8px; background: repeating-linear-gradient(90deg, #777 0 1px, transparent 1px 2px); }
.ti { width: 16px; height: 16px; flex: none; margin-right: 3px; }
.sel::after { content: ""; position: absolute; left: 9px; top: 0; width: 69px; height: 16px; background: #d9d9d9; z-index: 0; }
.sel > * { position: relative; z-index: 1; }
.cad { width: 15px; height: 15px; margin-left: 5px; }
.new { font: 700 8px/9px "Liberation Sans", sans-serif; background: #ffe11a; color: #222; padding: 0 1px; align-self: flex-start; margin-top: -4px; margin-left: 1px; }
.nav-b.b2 { height: 21px; margin-top: 1px; }

.right { width: 1196px; margin-left: 5px; flex: none; display: flex; flex-direction: column; }
.row { display: flex; flex: none; }
.row-a { height: 26px; }
.row-b { height: 26px; margin-top: 1px; gap: 2px; }
.row-c { height: 26px; margin-top: 3px; }
.band-edit { width: 789px; padding-left: 3px; margin-left: 1px; }
.band-sel { width: 638px; padding-left: 3px; margin-left: 1px; }
.combos { display: flex; gap: 4px; margin-left: -2px; margin-right: -1px; }
.combo { width: 68px; height: 24px; background: #fff; display: flex; align-items: center; justify-content: space-between; padding-left: 2px; }
.combo.first { width: 56px; padding-left: 1px; }
.band-sel .box { margin-left: -3px; gap: 3px; }
.band-sel .box + .t { margin-left: -4px; }
.band-aux { width: 422px; padding-left: 3px; }
.band-aux .dd { margin-left: 2px; }
.band-tool { width: 286px; padding-left: 3px; margin-left: 1px; }
.band-tool .box { margin-left: -3px; gap: 3px; }
.band-tool .dd-b { margin-left: -5px; }
.band-small { width: 30px; margin-left: 126px; padding-left: 3px; }
.cad-view { display: block; width: 1196px; height: 215px; flex: none; }
.cad-t { font: 14px "Liberation Sans", sans-serif; fill: #c8c8c8; text-anchor: middle; }
.row-d { height: 27px; margin-top: 1px; gap: 2px; }
.band-d1 { width: 208px; padding-left: 3px; margin-left: 1px; }
.band-d1 .box { margin-left: -3px; margin-right: -2px; gap: 1px; padding-left: 4px; }
.band-d2 { width: 264px; padding-left: 4px; }
.band-d2 .box { margin-left: -3px; gap: 1px; padding: 0 3px 0 5px; width: 51px; flex: none; }
.band-d2 .box-j { margin-left: -7px; margin-right: -3px; gap: 3px; padding-left: 3px; }
.band-d3 { width: 409px; gap: 0; padding-left: 8px; margin-left: 1px; }
.c-off { width: 59px; }
.c-off .ddcell { width: 12px; }
.s-x { margin: 0 2px 0 3px; }
.gr { color: #808080; }
.num-in { height: 22px; border: 1px solid #7a7a7a; background: #f0f0f0; display: flex; align-items: center; justify-content: flex-end; margin-left: 4px; flex: none; color: #6d6d6d; }
.num-in b { font-weight: 400; margin-right: 5px; }
.n-x { width: 57px; }
.n-y { width: 58px; margin-left: 3px; }
.n-r { width: 68px; }
.spin { width: 12px; height: 18px; position: relative; margin-right: 1px; background:
  linear-gradient(45deg, transparent 50%, #444 50%) 2px 4px / 4px 4px no-repeat,
  linear-gradient(-45deg, transparent 50%, #444 50%) 6px 4px / 4px 4px no-repeat,
  linear-gradient(135deg, transparent 50%, #444 50%) 2px 11px / 4px 4px no-repeat,
  linear-gradient(-135deg, transparent 50%, #444 50%) 6px 11px / 4px 4px no-repeat; }
.lab-mm { margin-left: 2px; }
.lab-y { margin-left: 5px; }
.s-r { margin: 0 3px 0 3px; }
.chk { width: 11px; height: 11px; border: 1px solid #8a8a8a; background: #fff; flex: none; }
.lab-r { margin-left: 9px; }
.lab-d { margin-left: 2px; align-self: flex-start; margin-top: 3px; }

/* lower panel */
.panel { margin-top: 4px; height: 293px; display: flex; flex: none; }
.strip { width: 13px; flex: none; padding: 3px 0 0 1px; display: flex; flex-direction: column; }
.strip svg { width: 10px; height: 10px; }
.strip-dots { flex: 1; margin: 3px 3px 0 1px; background: radial-gradient(#bbb 1px, transparent 1.500px) 0 0 / 3px 4px; }
.pane { flex: 1; min-width: 0; display: flex; flex-direction: column; }
.ptools { height: 26px; margin-top: 2px; display: flex; align-items: center; gap: 7px; padding-left: 3px; background: linear-gradient(#fcfcfc, #f2f2f2); flex: none; }
.ptools .sep { margin: 0 -1px 0 0; }
.total { margin-left: 2px; letter-spacing: .1px; }
.grid-wrap { flex: 1; background: #fff; border: 1px solid #bdbdbd; border-width: 1px 0 0 1px; overflow: hidden; }
.grid { border-collapse: collapse; table-layout: fixed; width: 1182px; }
.c0 { width: 32px; } .c1 { width: 73px; } .c2 { width: 57px; } .c3 { width: 35px; } .c4 { width: 33px; }
.c5 { width: 201px; } .c6 { width: 166px; } .c7 { width: 156px; } .c8 { width: 61px; } .c9 { width: 38px; }
.c10 { width: 39px; } .c11 { width: 49px; } .c12 { width: 61px; } .c13 { width: 61px; } .c14 { width: 72px; } .c15 { width: 48px; }
.grid th, .grid td { padding: 0; border: 1px solid #c4c4c4; border-top: 0; }
.grid th { height: 20px; font-weight: 400; background: linear-gradient(#fafafa, #f2f2f2); white-space: nowrap; overflow: hidden; }
.grid th.clip { text-align: left; padding-left: 10px; }
.grid td { height: 19px; background: #fff; }
.grid th.hot { background: linear-gradient(#fcdca0, #f3c06a); color: #4b0082; }
.grid td.rh { background: #fdd28a; color: #4b0082; text-align: center; font: 12px/16px "Liberation Mono", monospace; }
.grid td.cur { border-left: 2px solid #000; }
.grid td.pick { background: #d7e8f7; }
.hscroll { height: 18px; flex: none; border: 2px solid #c4c4c4; border-width: 0 2px 2px 1px; background: #efefef; display: flex; align-items: center; padding: 0 0 0 17px; }
.hscroll .thumb { width: 824px; height: 15px; background: #c8c8c8; }
.arr-l { width: 6px; height: 6px; border-left: 2px solid #555; border-bottom: 2px solid #555; transform: rotate(45deg); margin: 0 3px 0 -9px; }
.arr-r { width: 6px; height: 6px; border-right: 2px solid #555; border-top: 2px solid #555; transform: rotate(45deg); margin-left: auto; margin-right: 6px; }

/* status bar */
.status { margin-top: 1px; height: 20px; display: flex; gap: 2px; flex: none; background: #f0f0f0; }
.status span { border: 1px solid #d4d4d4; background: linear-gradient(#fdfdfd, #f2f2f2); line-height: 19px; white-space: nowrap; padding-left: 1px; }
.status .s1, .status .s6 { font: 12px "Liberation Mono", monospace; letter-spacing: -1.2px; line-height: 19px; }
.s1 { width: 148px; }
.s2 { width: 78px; } .s3 { width: 99px; } .s4 { width: 48px; padding-left: 3px !important; }
.s5 { width: 912px; padding-left: 2px !important; }
.s6 { flex: 1; }

/* taskbar */
.taskbar { height: 40px; flex: none; background: #05141d; display: flex; align-items: center; color: #fff; position: relative; }
.start { width: 48px; height: 40px; background: #000; display: flex; align-items: center; justify-content: center; flex: none; }
.start svg { width: 16px; height: 16px; }
.search { width: 344px; height: 40px; background: #333; display: flex; align-items: center; flex: none; color: #8f8f8f; font-size: 14px; padding-left: 9px; }
.cortana { width: 20px; height: 20px; }
.search span { margin-left: 7px; }
.mic { width: 12px; height: 20px; margin-left: auto; margin-right: 15px; }
.apps { display: flex; flex: none; margin-left: 0; }
.app { width: 49.500px; height: 40px; display: flex; align-items: center; justify-content: center; position: relative; }
.app svg { width: 24px; height: 24px; }
.n2 { padding-left: 4px; } .n3 { padding-left: 6px; } .n4 { padding-left: 8px; } .n6 { padding-left: 12px; }
.run::after { content: ""; position: absolute; left: 5px; right: 5px; bottom: 0; height: 2px; background: #6fb6f0; }
.cur-app { background: #30393f; }
.cur-app::after { left: 0; right: 0; }
.tray-link { margin-left: 9px; color: #ddd; width: 24px; flex: none; }
.tray-cpu { margin-left: 17px; width: 60px; display: flex; flex-direction: column; align-items: center; line-height: 19px; flex: none; }
.tray { margin-left: 10px; display: flex; align-items: center; flex: none; gap: 8px; }
.tray svg { height: 16px; flex: none; }
.ti1 { width: 16px; } .ti2 { width: 18px; } .ti3 { width: 16px; } .ti4 { width: 18px; } .ti5 { width: 22px; margin-left: -4px; }
.ti6 { font-size: 14px; margin-left: 5px; } .ti7 { width: 16px; margin-left: 3px; }
.clock { margin-left: 14px; width: 66px; display: flex; flex-direction: column; align-items: center; line-height: 19px; font-size: 13px; flex: none; }
.notify { width: 18px; height: 18px; margin-left: 16px; }
.edge { margin-left: auto; width: 2px; height: 40px; background: #3a3f44; }
.ico-t { font: 700 7px "Liberation Sans", sans-serif; fill: #222; }
```
